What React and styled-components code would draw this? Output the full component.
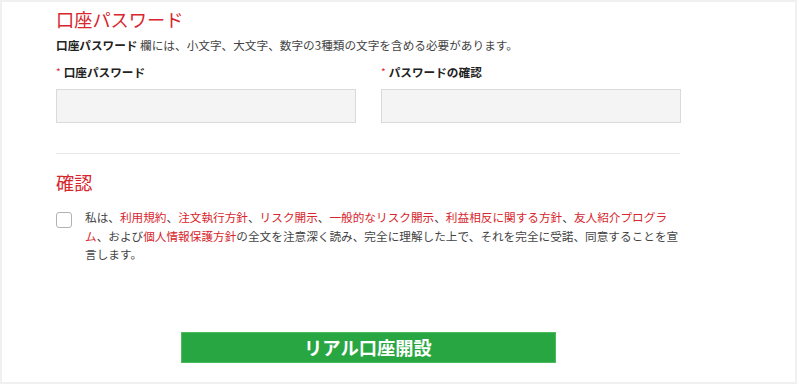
import React from 'react';
import styled, { createGlobalStyle } from 'styled-components';

const GlobalStyle = createGlobalStyle`
  html, body {
    margin: 0;
    padding: 0;
    background: #f0f0f0;
  }
  body {
    font-family: "Noto Sans CJK JP", "Noto Sans", sans-serif;
    color: #333;
  }
`;

const Frame = styled.div`
  padding: 2px 2px 2px 2px;
  width: 797px;
  height: 384px;
  box-sizing: border-box;
`;

const Card = styled.div`
  background: #fff;
  height: 380px;
  box-sizing: border-box;
  padding: 5px 0 0 54px;
`;

const Content = styled.div`
  width: 624px;
`;

const SectionTitle = styled.h2`
  margin: ${p => p.$top || 0}px 0 0;
  font-size: 18.2px;
  line-height: 24px;
  font-weight: 400;
  color: #d7262d;
`;

const Note = styled.p`
  margin: 5px 0 0;
  font-size: 11.65px;
  line-height: 18px;
  color: #444;
  strong {
    color: #222;
    font-weight: 700;
  }
`;

const FieldGrid = styled.div`
  display: grid;
  grid-template-columns: 300px 300px;
  column-gap: 25px;
  margin-top: 9px;
`;

const Field = styled.div`
  display: flex;
  flex-direction: column;
  gap: 8px;
`;

const Label = styled.label`
  display: flex;
  align-items: center;
  gap: 3px;
  font-size: 11.65px;
  line-height: 18px;
  font-weight: 700;
  color: #222;
`;

const Star = styled.span`
  color: #e0282f;
  font-size: 10px;
  font-weight: 400;
  line-height: 1;
`;

const Input = styled.input`
  box-sizing: border-box;
  width: 300px;
  height: 34px;
  border: 1px solid #dadada;
  background: #f4f4f4;
  outline: none;
`;

const Divider = styled.hr`
  margin: 30px 0 0;
  border: 0;
  border-top: 1px solid #e8e8e8;
  width: 624px;
`;

const ConsentRow = styled.div`
  display: flex;
  align-items: flex-start;
  gap: 13px;
  margin-top: 14px;
`;

const Check = styled.input.attrs({ type: 'checkbox' })`
  appearance: none;
  flex: none;
  width: 16px;
  height: 16px;
  margin: 4px 0 0 0;
  border: 1px solid #b2b2b2;
  border-radius: 3px;
  background: #fff;
  box-sizing: border-box;
`;

const ConsentText = styled.p`
  margin: 0;
  width: 596px;
  font-size: 11.65px;
  line-height: 18.5px;
  color: #444;
  a {
    color: #d7262d;
    text-decoration: none;
  }
`;

const Submit = styled.button`
  display: block;
  margin: 68px auto 0;
  width: 375px;
  height: 31px;
  border: 1px solid #4cbb5f;
  background: #28a642;
  color: #fff;
  font-family: inherit;
  font-size: 18.3px;
  font-weight: 700;
  line-height: 1;
  padding: 0;
`;

const links = ['利用規約', '注文執行方針', 'リスク開示', '一般的なリスク開示', '利益相反に関する方針', '友人紹介プログラム'];

export default function App() {
  return (
    <Frame>
      <GlobalStyle />
      <Card>
        <Content>
          <SectionTitle>口座パスワード</SectionTitle>
          <Note>
            <strong>口座パスワード</strong> 欄には、小文字、大文字、数字の3種類の文字を含める必要があります。
          </Note>
          <FieldGrid>
            <Field>
              <Label><Star>*</Star>口座パスワード</Label>
              <Input type="password" />
            </Field>
            <Field>
              <Label><Star>*</Star>パスワードの確認</Label>
              <Input type="password" />
            </Field>
          </FieldGrid>
          <Divider />
          <SectionTitle $top={16}>確認</SectionTitle>
          <ConsentRow>
            <Check />
            <ConsentText>
              私は、
              {links.map((l, i) => (
                <React.Fragment key={l}>
                  <a href="#">{l}</a>
                  {i < links.length - 1 ? '、' : ''}
                </React.Fragment>
              ))}
              、および<a href="#">個人情報保護方針</a>の全文を注意深く読み、完全に理解した上で、それを完全に受諾、同意することを宣言します。
            </ConsentText>
          </ConsentRow>
          <Submit>リアル口座開設</Submit>
        </Content>
      </Card>
    </Frame>
  );
}
